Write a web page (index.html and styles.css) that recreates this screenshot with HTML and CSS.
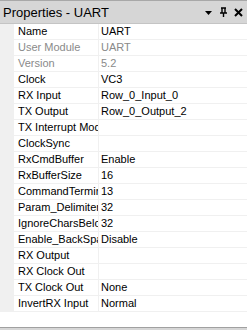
FILE: index.html
```html
<!DOCTYPE html>
<html lang="en">

<head>
    <meta charset="UTF-8">
    <title>Properties - UART</title>
    <link rel="stylesheet" href="styles.css">
</head>

<body>
    <div class="panel">
        <div class="titlebar">
            <span class="title">Properties - UART</span>
            <div class="tools">
                <svg width="9" height="9" viewBox="0 0 9 9"><path d="M1 3h7L4.5 7z" fill="#000"/></svg>
                <svg width="9" height="10" viewBox="0 0 9 10"><path d="M2 1h5M3 1v5M6 1v5M1 6h7M4.5 6v4" stroke="#000" stroke-width="1.4" fill="none"/></svg>
                <svg width="9" height="9" viewBox="0 0 9 9"><path d="M1 1l7 7M8 1l-7 7" stroke="#000" stroke-width="2"/></svg>
            </div>
        </div>

        <div class="grid">
            <div class="row"><span class="name">Name</span><span class="value">UART</span></div>
            <div class="row dim"><span class="name">User Module</span><span class="value">UART</span></div>
            <div class="row dim"><span class="name">Version</span><span class="value">5.2</span></div>
            <div class="row"><span class="name">Clock</span><span class="value">VC3</span></div>
            <div class="row"><span class="name">RX Input</span><span class="value">Row_0_Input_0</span></div>
            <div class="row"><span class="name">TX Output</span><span class="value">Row_0_Output_2</span></div>
            <div class="row"><span class="name">TX Interrupt Mode</span><span class="value"></span></div>
            <div class="row"><span class="name">ClockSync</span><span class="value"></span></div>
            <div class="row"><span class="name">RxCmdBuffer</span><span class="value">Enable</span></div>
            <div class="row"><span class="name">RxBufferSize</span><span class="value">16</span></div>
            <div class="row"><span class="name">CommandTerminator</span><span class="value">13</span></div>
            <div class="row"><span class="name">Param_Delimiter</span><span class="value">32</span></div>
            <div class="row"><span class="name">IgnoreCharsBelow</span><span class="value">32</span></div>
            <div class="row"><span class="name">Enable_BackSpace</span><span class="value">Disable</span></div>
            <div class="row"><span class="name">RX Output</span><span class="value"></span></div>
            <div class="row"><span class="name">RX Clock Out</span><span class="value"></span></div>
            <div class="row"><span class="name">TX Clock Out</span><span class="value">None</span></div>
            <div class="row"><span class="name">InvertRX Input</span><span class="value">Normal</span></div>
        </div>

        <div class="footer"></div>
    </div>
</body>

</html>
```

FILE: styles.css
```css
* {
    margin: 0;
    padding: 0;
    box-sizing: border-box;
}

body {
    background: #fff;
    font-family: "Liberation Sans", Arial, sans-serif;
    font-size: 11px;
    color: #000;
}

.panel {
    width: 247px;
    height: 330px;
    display: flex;
    flex-direction: column;
}

.titlebar {
    height: 24px;
    background: #d6d6d6;
    border-top: 1px solid #a8a8a8;
    border-bottom: 1px solid #c4c4c4;
    display: flex;
    align-items: center;
    padding: 0 4px 0 3px;
}

.title {
    font-size: 13px;
    flex: 1;
}

.tools {
    display: flex;
    align-items: center;
    gap: 6px;
}

.grid {
    display: flex;
    flex-direction: column;
}

.row {
    height: 16px;
    display: grid;
    grid-template-columns: 14px 85px 1fr;
}

.row::before {
    content: "";
    background: #f0f0f0;
}

.row .name,
.row .value {
    border-bottom: 1px solid #f0f0f0;
    white-space: nowrap;
    overflow: hidden;
    line-height: 15px;
}

.row .name {
    padding-left: 4px;
    border-right: 1px solid #f0f0f0;
}

.row .value {
    padding-left: 2px;
}

.row.dim {
    color: #8a8a8a;
}

.footer {
    margin-top: auto;
    height: 3px;
    background: #d6d6d6;
    border-top: 1px solid #a0a0a0;
}
```
